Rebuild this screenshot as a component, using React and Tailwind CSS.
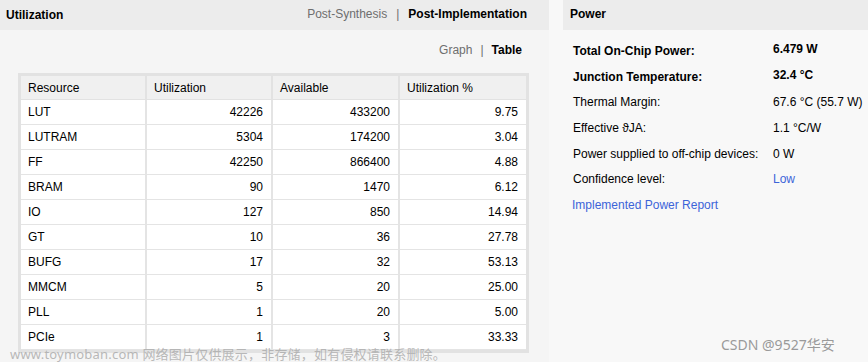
const rows = [
  ["LUT", "42226", "433200", "9.75"],
  ["LUTRAM", "5304", "174200", "3.04"],
  ["FF", "42250", "866400", "4.88"],
  ["BRAM", "90", "1470", "6.12"],
  ["IO", "127", "850", "14.94"],
  ["GT", "10", "36", "27.78"],
  ["BUFG", "17", "32", "53.13"],
  ["MMCM", "5", "20", "25.00"],
  ["PLL", "1", "20", "5.00"],
  ["PCIe", "1", "3", "33.33"],
];

const power = [
  ["Total On-Chip Power:", "6.479 W", true],
  ["Junction Temperature:", "32.4 °C", true],
  ["Thermal Margin:", "67.6 °C (55.7 W)"],
  ["Effective ϑJA:", "1.1 °C/W"],
  ["Power supplied to off-chip devices:", "0 W"],
  ["Confidence level:", "Low", false, true],
];

export default function App() {
  return (
    <div className="relative w-[868px] h-[362px] flex bg-[#f8f8f8] text-[12px] text-black overflow-hidden font-['Liberation_Sans',Arial,sans-serif]">
      {/* utilization */}
      <div className="w-[549px] flex flex-col">
        <div className="h-[30px] shrink-0 bg-[#ececec] flex items-center justify-between pl-[6px] pr-[22px]">
          <span className="font-bold">Utilization</span>
          <div className="flex items-center -mt-[3px]">
            <span className="text-[#6e6e6e]">Post-Synthesis</span>
            <span className="text-[#6e6e6e] mx-[9px]">|</span>
            <span className="font-bold">Post-Implementation</span>
          </div>
        </div>
        <div className="flex-1 bg-[#f5f5f5] flex flex-col">
          <div className="h-[43px] flex items-start justify-end pr-[27px] pt-[13px] leading-[14px]">
            <span className="text-[#6e6e6e]">Graph</span>
            <span className="text-[#6e6e6e] mx-[8px]">|</span>
            <span className="font-bold">Table</span>
          </div>
          <div className="ml-[18px] w-[511px] border-[3px] border-[#e2e2e2] bg-white">
            <div className="grid grid-cols-[126px_126px_127px_126px] h-[24px] bg-[#f0f0f0] border-b border-[#e2e2e2]">
              {["Resource", "Utilization", "Available", "Utilization %"].map((h, i) => (
                <div key={h} className={`flex items-center px-[7px] ${i < 3 ? "border-r-2 border-[#e2e2e2]" : ""}`}>{h}</div>
              ))}
            </div>
            {rows.map((r) => (
              <div key={r[0]} className="grid grid-cols-[126px_126px_127px_126px] h-[25px] border-b border-[#e4e4e4]">
                {r.map((c, i) => (
                  <div key={i} className={`flex items-center px-[7px] pr-[8px] ${i > 0 ? "justify-end" : ""} ${i < 3 ? "border-r-2 border-[#e4e4e4]" : ""}`}>{c}</div>
                ))}
              </div>
            ))}
          </div>
        </div>
      </div>

      {/* power */}
      <div className="ml-[14px] flex-1 flex flex-col">
        <div className="h-[30px] shrink-0 bg-[#ececec] flex items-center pl-[7px]">
          <span className="font-bold -mt-[2px]">Power</span>
        </div>
        <div className="pl-[10px] pt-[8px] flex flex-col">
          {power.map(([k, v, b, link]) => (
            <div key={k} className="h-[25.7px] flex items-center">
              <span className={`w-[200px] ${b ? "font-bold" : ""}`}>{k}</span>
              <span className={`${b ? "font-bold -mt-[3px]" : ""} ${link ? "text-[#3c64d8]" : ""}`}>{v}</span>
            </div>
          ))}
          <div className="h-[25.7px] flex items-center -ml-[1px] text-[#3c64d8]">Implemented Power Report</div>
        </div>
      </div>

      {/* watermarks */}
      <div className="absolute left-[10px] top-[346px] text-[13px] text-[#a8a8a8]/80 font-['Noto_Sans','Noto_Sans_CJK_SC',sans-serif] leading-[16px] tracking-[0.2px]">
        www.toymoban.com 网络图片仅供展示，非存储，如有侵权请联系删除。
      </div>
      <div className="absolute left-[721px] top-[335px] text-[14px] text-[#9a9a9a] font-['Noto_Sans','Noto_Sans_CJK_SC',sans-serif] leading-[20px]">
        CSDN @9527华安
      </div>
    </div>
  );
}
